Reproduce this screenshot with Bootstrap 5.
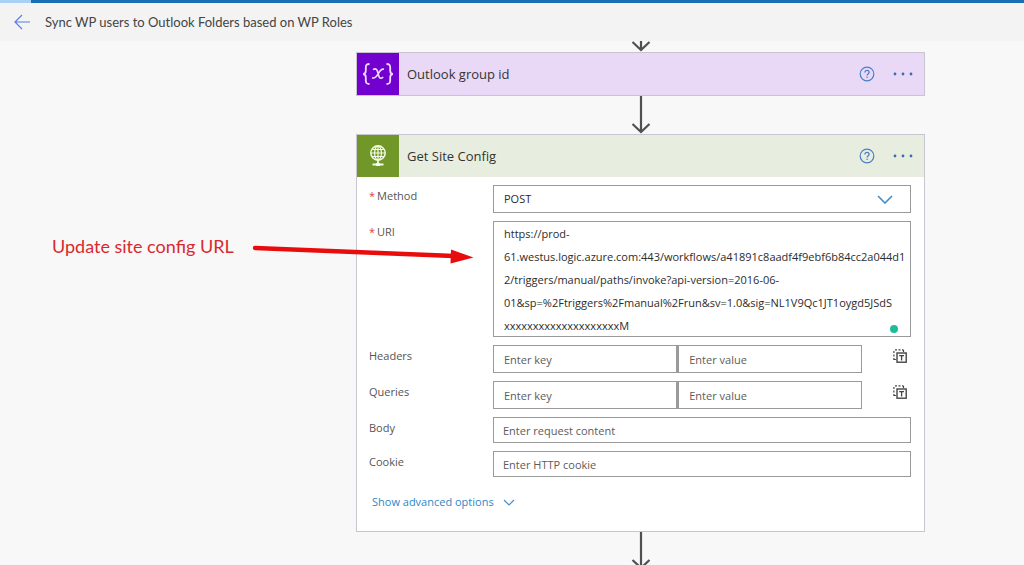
<!DOCTYPE html>
<html lang="en">
<head>
<meta charset="utf-8">
<meta name="viewport" content="width=device-width, initial-scale=1">
<title>Sync WP users to Outlook Folders based on WP Roles</title>
<link href="https://cdn.jsdelivr.net/npm/bootstrap@5.3.0/dist/css/bootstrap.min.css" rel="stylesheet">
<style>
  body { font-family: "Open Sans", "Noto Sans", sans-serif; font-size: 11px; line-height: 22px; color: #3a3a3a; background: #f8f8f8; }
  .load-track { height: 3px; border-radius: 0; background: #176fb2; }
  .load-track .progress-bar { width: 3%; background: #a9d0f5; }
  .title-bar { height: 38px; padding: 0 14px; gap: 15px; background: #f3f3f3; }
  .title-bar h1 { font-family: Lato, sans-serif; font-size: 13px; line-height: 22px; color: #444; }
  .canvas { scrollbar-width: none; }
  .canvas::-webkit-scrollbar { display: none; }
  .flow-grid { display: grid; grid-template-columns: minmax(0, 356fr) minmax(0, 569fr) minmax(0, 99fr); }
  .note { padding: 194px 0 0 52px; gap: 18px; font-family: Lato, sans-serif; font-size: 18px; color: #d9292e; white-space: nowrap; }
  .connector { display: block; margin: 0 auto; color: #505050; }
  .step { border: 1px solid #c9c5cf; border-radius: 0; background: #fff; color: inherit; }
  .step-head { height: 42px; padding-right: 11px; color: #333; }
  .step-head h2 { font-size: 13px; line-height: 22px; padding-left: 8px; }
  .step-icon { width: 42px; height: 42px; }
  .head-violet { background: #ead9f6; }
  .head-violet .step-icon { background: #7200cf; }
  .head-green { background: #e8eedf; }
  .head-green .step-icon { background: #709727; }
  .icon-btn { border: 0; padding: 0; background: none; color: #4a7fc6; display: block; }
  .help-btn { margin-right: 18px; }
  .fields { padding: 8px 13px 16px 12px; gap: 8px; }
  .field-line { display: grid; grid-template-columns: 124px minmax(0, 1fr); }
  .field-line label { color: #555; }
  .req { color: #e0403c; margin-right: 2px; }
  .field-line .form-control, .field-line .form-select { border: 1px solid #9a9a9a; border-radius: 0; font-size: 11px; line-height: 22px; color: #2c2c2c; background: #fff; height: 28px; padding: 0 10px; }
  .field-line .form-control::placeholder { color: #5c5c5c; opacity: 1; }
  .field-line textarea.form-control { height: 116px; line-height: 23px; padding: 0 4px 0 10px; resize: none; white-space: pre; overflow: hidden; display: block; }
  .field-line .form-control.slim { height: 26px; padding: 0 9px; }
  .pair { width: 369px; }
  .pair .form-control + .form-control { border-left-width: 2px; }
  .drop-mark { right: 18px; top: 10px; pointer-events: none; }
  .status-dot { width: 8px; height: 8px; right: 13px; bottom: 4px; background: #1fbc9c; }
  .more { color: #2f86c6; gap: 9px; margin: 6px 0 2px 3px; }
</style>
</head>
<body class="vh-100 d-flex flex-column overflow-hidden">
<svg width="0" height="0" class="position-absolute" aria-hidden="true">
  <symbol id="help" viewBox="0 0 16 16"><circle cx="8" cy="8" r="6.8" fill="none" stroke="currentColor" stroke-width="1.2"/><path d="M5.900 6.500c0-1.300.9-2.100 2.100-2.100s2.100.8 2.100 1.900c0 1.600-2 1.600-2 3.200" fill="none" stroke="currentColor" stroke-width="1.300"/><circle cx="8.100" cy="11.300" r=".8" fill="currentColor"/></symbol>
  <symbol id="dots" viewBox="0 0 20 4"><circle cx="2" cy="2" r="1.400"/><circle cx="10" cy="2" r="1.400"/><circle cx="18" cy="2" r="1.400"/></symbol>
  <symbol id="text-mode" viewBox="0 0 14 14"><path d="M2 .9h2M5.500 .9h2M9 .9h1.500M10.500 1v2M.9 2v2M.9 5.500v2M.9 9v1.500h2" fill="none" stroke="#444" stroke-width="1.200"/><rect x="4" y="4" width="9.200" height="9.200" fill="#fff" stroke="#444" stroke-width="1.400"/><path d="M6.200 6.600h4.800M8.600 6.600v4.800" stroke="#444" stroke-width="1.300"/></symbol>
  <symbol id="arrow-down" viewBox="0 0 20 38"><path d="M10 0v36M1.500 28l8.500 8 8.500-8" fill="none" stroke="currentColor" stroke-width="2.200"/></symbol>
</svg>

<div class="progress load-track flex-shrink-0" role="progressbar" aria-label="Loading" aria-valuenow="3" aria-valuemin="0" aria-valuemax="100"><div class="progress-bar"></div></div>
<header class="title-bar d-flex align-items-center flex-shrink-0">
  <button type="button" class="icon-btn" aria-label="Back">
    <svg class="d-block" width="16" height="16" viewBox="0 0 16 16" fill="none" stroke="#5b7ee0" stroke-width="1.200"><path d="M16 8H1M8 1L1 8l7 7"/></svg>
  </button>
  <h1 class="m-0 fw-normal">Sync WP users to Outlook Folders based on WP Roles</h1>
</header>

<main class="canvas flex-fill overflow-auto">
  <div class="flow-grid">
    <aside class="note d-flex align-items-start position-relative z-1">
      <span>Update site config URL</span>
      <svg class="flex-shrink-0" width="222" height="30" viewBox="0 0 222 30"><path d="M3 13L202 21" stroke="#e80c0c" stroke-width="4.500" stroke-linecap="round"/><path d="M199 14.500L221.500 22.500 198.500 28.500z" fill="#e80c0c"/></svg>
    </aside>

    <div>
      <svg class="connector" width="20" height="11" viewBox="0 27 20 11" aria-hidden="true"><use href="#arrow-down" width="20" height="38"/></svg>

      <section class="card step">
        <div class="step-head head-violet d-flex align-items-center">
          <div class="step-icon flex-shrink-0">
            <svg width="42" height="42" viewBox="0 0 42 42" fill="none" stroke="#f0dcff" stroke-width="1.800"><path d="M12.500 11c-3.200 0-3.700 1.200-3.700 3.500v3.200c0 2-.6 3-2.600 3.300 2 .3 2.600 1.300 2.600 3.300V27.500c0 2.300.5 3.500 3.700 3.500M29.500 11c3.200 0 3.700 1.200 3.700 3.500v3.200c0 2 .6 3 2.600 3.300-2 .3-2.600 1.300-2.600 3.300V27.500c0 2.300-.5 3.500-3.700 3.500"/><path d="M16 16.700c2.300-1.500 3.600-.8 4.300 1.300l1.500 5c.8 2.700 2.300 3 4.400 1M27 16.300c-2.300-.8-3.800 1-5.500 4s-3.800 5.500-6.500 4.400" stroke-width="1.600"/></svg>
          </div>
          <h2 class="m-0 fw-normal flex-fill">Outlook group id</h2>
          <button type="button" class="icon-btn help-btn" aria-label="Help"><svg class="d-block" width="16" height="16"><use href="#help"/></svg></button>
          <button type="button" class="icon-btn" aria-label="More"><svg class="d-block" width="20" height="4" fill="#3c6cab"><use href="#dots"/></svg></button>
        </div>
      </section>

      <svg class="connector" width="20" height="38" aria-hidden="true"><use href="#arrow-down"/></svg>

      <section class="card step">
        <div class="step-head head-green d-flex align-items-center">
          <div class="step-icon flex-shrink-0">
            <svg width="42" height="42" viewBox="0 0 42 42" fill="none" stroke="#f4fbe6" stroke-width="1.200"><circle cx="21" cy="18" r="7.200" stroke-width="1.500"/><ellipse cx="21" cy="18" rx="3.400" ry="7"/><path d="M21 11v14M14 18h14M15.300 14.500h11.400M15.300 21.500h11.400"/><path d="M21 25v4M15.500 29.500h11" stroke-width="1.800"/><path d="M19 28h4v3h-4z" fill="#f4fbe6" stroke="none"/></svg>
          </div>
          <h2 class="m-0 fw-normal flex-fill">Get Site Config</h2>
          <button type="button" class="icon-btn help-btn" aria-label="Help"><svg class="d-block" width="16" height="16"><use href="#help"/></svg></button>
          <button type="button" class="icon-btn" aria-label="More"><svg class="d-block" width="20" height="4" fill="#3c6cab"><use href="#dots"/></svg></button>
        </div>

        <form class="fields d-flex flex-column">
          <div class="field-line">
            <label for="method"><span class="req">*</span>Method</label>
            <div class="position-relative">
              <select id="method" class="form-select"><option>POST</option><option>GET</option></select>
              <svg class="drop-mark position-absolute" width="16" height="9" viewBox="0 0 16 9" fill="none" stroke="#3f8ccb" stroke-width="1.600"><path d="M1 1l7 7 7-7"/></svg>
            </div>
          </div>
          <div class="field-line">
            <label for="uri"><span class="req">*</span>URI</label>
            <div class="position-relative">
              <textarea id="uri" class="form-control" spellcheck="false">https://prod-
61.westus.logic.azure.com:443/workflows/a41891c8aadf4f9ebf6b84cc2a044d1
2/triggers/manual/paths/invoke?api-version=2016-06-
01&amp;sp=%2Ftriggers%2Fmanual%2Frun&amp;sv=1.0&amp;sig=NL1V9Qc1JT1oygd5JSdS
xxxxxxxxxxxxxxxxxxxxM</textarea>
              <span class="status-dot position-absolute rounded-circle"></span>
            </div>
          </div>
          <div class="field-line">
            <label for="header-key">Headers</label>
            <div class="d-flex justify-content-between">
              <div class="pair d-flex">
                <input id="header-key" class="form-control" placeholder="Enter key">
                <input class="form-control" placeholder="Enter value" aria-label="Header value">
              </div>
              <button type="button" class="icon-btn me-1 align-self-start mt-1" aria-label="Switch headers to text mode"><svg class="d-block" width="14" height="14"><use href="#text-mode"/></svg></button>
            </div>
          </div>
          <div class="field-line">
            <label for="query-key">Queries</label>
            <div class="d-flex justify-content-between">
              <div class="pair d-flex">
                <input id="query-key" class="form-control" placeholder="Enter key">
                <input class="form-control" placeholder="Enter value" aria-label="Query value">
              </div>
              <button type="button" class="icon-btn me-1 align-self-start mt-1" aria-label="Switch queries to text mode"><svg class="d-block" width="14" height="14"><use href="#text-mode"/></svg></button>
            </div>
          </div>
          <div class="field-line">
            <label for="req-body">Body</label>
            <input id="req-body" class="form-control slim" placeholder="Enter request content">
          </div>
          <div class="field-line">
            <label for="cookie">Cookie</label>
            <input id="cookie" class="form-control slim" placeholder="Enter HTTP cookie">
          </div>
          <a href="#" class="more d-inline-flex align-items-center align-self-start text-decoration-none">Show advanced options
            <svg width="12" height="7" viewBox="0 0 12 7" fill="none" stroke="#3f8ccb" stroke-width="1.100"><path d="M1 1l5 5 5-5"/></svg></a>
        </form>
      </section>

      <svg class="connector" width="20" height="38" aria-hidden="true"><use href="#arrow-down"/></svg>
    </div>
  </div>
</main>
<script src="https://cdn.jsdelivr.net/npm/bootstrap@5.3.0/dist/js/bootstrap.bundle.min.js"></script>
</body>
</html>
